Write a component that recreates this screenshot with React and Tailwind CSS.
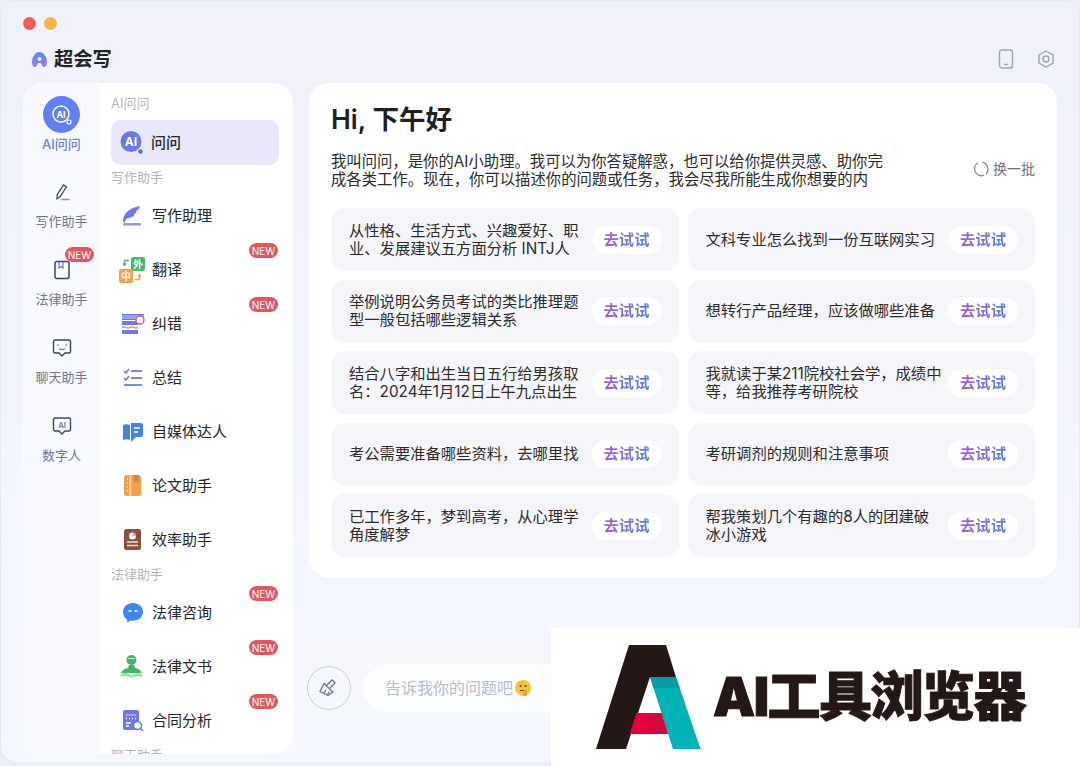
const Badge = ({ cls = "right-[1px] top-0" }) => (
  <span className={`absolute ${cls} flex h-[15px] w-[29px] items-center justify-center rounded-full bg-[#e0585f] text-[10px] leading-none text-white`}>NEW</span>
);

const Svg = ({ children, s = 26, vb = "0 0 26 26" }) => (
  <svg width={s} height={s} viewBox={vb} fill="none" className="shrink-0">{children}</svg>
);

const icons = {
  ask: (
    <Svg>
      <circle cx="11" cy="11.500" r="10.500" fill="#6d78e6" />
      <text x="11" y="16" textAnchor="middle" fontSize="12" fontWeight="700" fill="#fff" fontFamily="Inter">AI</text>
      <circle cx="20.500" cy="21.500" r="2.200" fill="#5a64d8" />
    </Svg>
  ),
  write: (
    <Svg>
      <path d="M3 17C4 10 9 5 20 3c-1 3-2 4-4 5 1 1 0 2-2 3 1 1 0 2-2 3-2 1-5 1-6 2l-1 3H3v-2z" fill="#6f78e6" />
      <rect x="3" y="20" width="18" height="2.400" rx="1.200" fill="#8e96ee" />
      <path d="M9 17h6" stroke="#fff" strokeWidth="1.200" />
    </Svg>
  ),
  translate: (
    <div className="ml-[-3px]">
      <Svg>
        <rect x="12" y="0" width="14" height="14" rx="2.500" fill="#45b766" />
        <text x="19" y="11" textAnchor="middle" fontSize="10" fontWeight="700" fill="#fff" fontFamily="Noto Sans CJK SC">外</text>
        <rect x="0" y="12" width="14" height="14" rx="2.500" fill="#f2a04a" />
        <text x="7" y="23" textAnchor="middle" fontSize="10" fontWeight="700" fill="#fff" fontFamily="Noto Sans CJK SC">中</text>
        <path d="M10 3.500H5.500V8M4 6.500l1.500 2 1.500-2" stroke="#45b766" strokeWidth="1.300" />
        <path d="M16 22.500h4.500V18M19 19.500l1.500-2 1.500 2" stroke="#f2a04a" strokeWidth="1.300" />
      </Svg>
    </div>
  ),
  correct: (
    <Svg s={24} vb="0 0 24 24">
      <rect x="1" y="2" width="22" height="6" fill="#6f78e6" />
      <path d="M1 4h22M1 6h22" stroke="#fff" strokeWidth=".6" />
      <rect x="1" y="9" width="16" height="4" fill="#6f78e6" />
      <path d="M1 15.500q2-1.500 4 0t4 0 4 0 4 0" stroke="#e0585f" strokeWidth="1" />
      <rect x="1" y="18" width="16" height="4" fill="#6f78e6" />
      <circle cx="19" cy="8" r="4" fill="#fff" stroke="#e0585f" strokeWidth="1.400" />
    </Svg>
  ),
  sum: (
    <Svg s={22} vb="0 0 22 22">
      <path d="M2 4l2 2 3-4M2 11l2 2 3-4" stroke="#6f78e6" strokeWidth="1.600" />
      <path d="M9 4h11M9 11h11M2 18h18" stroke="#7f87ea" strokeWidth="2" />
    </Svg>
  ),
  media: (
    <Svg s={22} vb="0 0 22 22">
      <path d="M1 4c2-1 5-1 7 0v15c-2-1-5-1-7 0z" fill="#3f85e6" />
      <path d="M9 2h10a2 2 0 0 1 2 2v10a2 2 0 0 1-2 2h-5l-5 5z" fill="#3f85e6" />
      <path d="M12 7h6M12 11h4" stroke="#fff" strokeWidth="1.500" />
    </Svg>
  ),
  thesis: (
    <Svg s={24} vb="0 0 24 24">
      <rect x="3" y="1" width="17" height="21" rx="2.500" fill="#eda14a" />
      <rect x="8" y="1" width="2.500" height="21" fill="#f6c98e" />
      <path d="M13 1h5v8l-2.500-2-2.500 2z" fill="#d9852a" />
      <path d="M6 5h1M6 9h1M6 13h1M6 17h1" stroke="#fff" strokeWidth="1.500" />
    </Svg>
  ),
  efficiency: (
    <Svg s={24} vb="0 0 24 24">
      <rect x="3" y="1" width="17" height="21" rx="2.500" fill="#8a4f3d" />
      <circle cx="11.500" cy="8" r="3.500" fill="#fff" />
      <path d="M11.500 8V4.500a3.500 3.500 0 0 1 3.500 3.500z" fill="#c9a79b" />
      <path d="M6 14h11M6 17.500h11" stroke="#f1e4df" strokeWidth="1.600" />
    </Svg>
  ),
  consult: (
    <Svg s={22} vb="0 0 22 22">
      <path d="M11 1c5.500 0 10 3.800 10 8.800s-4.500 9-10 9c-.8 0-2 0-3-.3L5.500 21l-.5-3.500C2.500 16 1 13 1 9.800 1 4.800 5.500 1 11 1z" fill="#3d87f0" />
      <path d="M6.500 9h3M12.500 9h3" stroke="#fff" strokeWidth="1.600" />
    </Svg>
  ),
  doc: (
    <Svg>
      <ellipse cx="11.500" cy="6" rx="5" ry="5" fill="#46b466" />
      <path d="M8 4.500h7" stroke="#cdeed6" strokeWidth="1.200" />
      <path d="M9 11h5l1 3c3 .5 6 2 7 5H1c1-3 4-4.500 7-5z" fill="#46b466" />
      <path d="M1 20c4-1 7-1 10.500 1 3.500-2 6.500-2 10.500-1v3c-4-1-7-1-10.500 1C8 22 5 22 1 23z" fill="#9fdcb1" />
    </Svg>
  ),
  contract: (
    <Svg s={24} vb="0 0 24 24">
      <rect x="2" y="1" width="16" height="20" rx="2" fill="#6f78e6" />
      <path d="M5 6h10" stroke="#d9dcfb" strokeWidth="1.200" />
      <path d="M5 9.500h1M8 9.500h1M11 9.500h1M14 9.500h1" stroke="#fff" strokeWidth="1.300" />
      <path d="M5 14h5M5 17h3" stroke="#fff" strokeWidth="1.300" />
      <circle cx="16.500" cy="16.500" r="4" fill="#fff" stroke="#4d7fd8" strokeWidth="1.500" />
      <path d="M19.500 19.500l2.500 2.500" stroke="#4d7fd8" strokeWidth="1.600" />
    </Svg>
  ),
};

const Item = ({ icon, label, isNew }) => (
  <div className="relative flex h-[54px] items-center gap-[6px] pl-[9px]">
    <span className="flex w-[26px] shrink-0 items-center justify-center">{icons[icon]}</span>
    <span className="text-[15px] leading-[20px] text-[#262626]">{label}</span>
    {isNew && <Badge />}
  </div>
);

const Section = ({ cls = "", children }) => (
  <div className={`h-[14px] text-[13px] leading-[14px] text-[#b4b5bb] ${cls}`}>{children}</div>
);

const railStroke = "#3f4560";
const RailItem = ({ label, isNew, children }) => (
  <div className="relative flex h-[78px] flex-col items-center">
    <span className="mt-[5px] flex h-[24px] w-[24px] items-center justify-center">{children}</span>
    <span className="mt-[9px] text-[13px] leading-[16px] text-[#70748f]">{label}</span>
    {isNew && <Badge cls="right-[6px] top-[-6px]" />}
  </div>
);

const prompts = [
  ["从性格、生活方式、兴趣爱好、职业、发展建议五方面分析 INTJ人", "文科专业怎么找到一份互联网实习"],
  ["举例说明公务员考试的类比推理题型一般包括哪些逻辑关系", "想转行产品经理，应该做哪些准备"],
  ["结合八字和出生当日五行给男孩取名：2024年1月12日上午九点出生", "我就读于某211院校社会学，成绩中等，给我推荐考研院校"],
  ["考公需要准备哪些资料，去哪里找", "考研调剂的规则和注意事项"],
  ["已工作多年，梦到高考，从心理学角度解梦", "帮我策划几个有趣的8人的团建破冰小游戏"],
];

const Card = ({ text }) => (
  <div className="flex h-[63px] items-center justify-between rounded-[14px] bg-[#f6f6fa] pl-[18px] pr-[17px]">
    <p className="w-[238px] text-[15.300px] leading-[18px] text-[#2b2b2b]">{text}</p>
    <span className="flex h-[28px] w-[70px] shrink-0 items-center justify-center rounded-full bg-white">
      <span className="bg-linear-to-r from-[#a25cd6] to-[#4f80e2] bg-clip-text text-[15.300px] font-bold leading-[20px] text-transparent">去试试</span>
    </span>
  </div>
);

export default function App() {
  return (
    <div className="relative h-[766px] w-[1080px] overflow-hidden bg-[#eceef6] font-['Inter','Noto_Sans_CJK_SC',sans-serif]">
      <div className="h-[763px] rounded-[16px] border border-[#e6e8f3] bg-linear-to-b from-[#f0f1fb] to-[#f6f8fe]">
        <div className="flex h-[45px] items-center gap-[8px] pl-[22px]">
          <span className="h-[13px] w-[13px] rounded-full bg-[#ee5f59]" />
          <span className="h-[13px] w-[13px] rounded-full bg-[#f3b54a]" />
        </div>
        <div className="flex h-[26px] items-center justify-between pl-[30px] pr-[24px]">
          <div className="flex items-center gap-[6px]">
            <svg width="17" height="17" viewBox="0 0 17 17" fill="none">
              <defs>
                <linearGradient id="lg" x1="0" y1="0" x2="0" y2="1">
                  <stop offset="0" stopColor="#4d8df2" />
                  <stop offset="1" stopColor="#a57bea" />
                </linearGradient>
              </defs>
              <path d="M8.500 1C12.500 1 16 6 16 11.500c0 2.500-1.200 4.500-3 4.500-1.500 0-2-1.200-2.300-2.500-.3-1-1-1.500-2.200-1.500s-1.900.5-2.200 1.500C6 14.800 5.500 16 4 16c-1.800 0-3-2-3-4.500C1 6 4.500 1 8.500 1z" fill="url(#lg)" />
              <circle cx="8.500" cy="8" r="2" fill="#f0f1fb" />
            </svg>
            <span className="text-[19.300px] font-bold leading-[26px] text-[#232323]">超会写</span>
          </div>
          <div className="flex items-center gap-[23px]">
            <svg width="16" height="20" viewBox="0 0 16 20" fill="none" stroke="#9ea3b3" strokeWidth="1.400">
              <rect x="1.500" y="1" width="13" height="18" rx="2.500" />
              <path d="M6 15.500h4" />
            </svg>
            <svg width="18" height="18" viewBox="0 0 18 18" fill="none" stroke="#9ea3b3" strokeWidth="1.400">
              <path d="M9 1l7 4v8l-7 4-7-4V5z" />
              <circle cx="9" cy="9" r="3" />
            </svg>
          </div>
        </div>

        <div className="mt-[11px] flex gap-[16px] pl-[22px]">
          <aside className="flex h-[671px] w-[270px] overflow-hidden rounded-[20px] bg-white">
            <div className="w-[77px] shrink-0 bg-[#f9faff] pt-[13px]">
              <div className="mb-[22px] flex flex-col items-center">
                <span className="flex h-[37px] w-[37px] items-center justify-center rounded-full bg-[#6180f2]">
                  <svg width="24" height="24" viewBox="0 0 24 24" fill="none">
                    <circle cx="11" cy="11" r="8" stroke="#fff" strokeWidth="1.500" />
                    <text x="11" y="14.500" textAnchor="middle" fontSize="9" fontWeight="700" fill="#fff" fontFamily="Inter">AI</text>
                    <circle cx="19" cy="19" r="2" fill="none" stroke="#fff" strokeWidth="1.200" />
                  </svg>
                </span>
                <span className="mt-[2px] text-[13px] font-medium leading-[18px] text-[#6b80db]">AI问问</span>
              </div>
              <RailItem label="写作助手">
                <svg width="20" height="20" viewBox="0 0 20 20" fill="none" stroke={railStroke} strokeWidth="1.300">
                  <path d="M5 16.800l.3-4.300L11.500 3l3 1.800-6.200 9.700z" />
                  <path d="M9.500 17.500h8" stroke="#8e92a8" />
                </svg>
              </RailItem>
              <RailItem label="法律助手" isNew>
                <svg width="18" height="20" viewBox="0 0 18 20" fill="none" stroke={railStroke} strokeWidth="1.500">
                  <rect x="2" y="1.500" width="14" height="17" rx="2" />
                  <path d="M6 2v6l2-1.500L10 8V2" stroke="#6f78e6" strokeWidth="1.200" />
                </svg>
              </RailItem>
              <RailItem label="聊天助手">
                <svg width="20" height="20" viewBox="0 0 20 20" fill="none" stroke={railStroke} strokeWidth="1.400">
                  <path d="M3 2h14a1.500 1.500 0 0 1 1.500 1.500v10A1.500 1.500 0 0 1 17 15h-4l-3 3-3-3H3a1.500 1.500 0 0 1-1.500-1.500v-10A1.500 1.500 0 0 1 3 2z" />
                  <path d="M6 6.500v1M14 6.500v1" />
                  <path d="M7 10.500c2 1.500 4 1.500 6 0" stroke="#6f78e6" />
                </svg>
              </RailItem>
              <RailItem label="数字人">
                <svg width="20" height="20" viewBox="0 0 20 20" fill="none" stroke={railStroke} strokeWidth="1.400">
                  <path d="M3 2h14a1.500 1.500 0 0 1 1.500 1.500v10A1.500 1.500 0 0 1 17 15h-4l-3 3-3-3H3a1.500 1.500 0 0 1-1.500-1.500v-10A1.500 1.500 0 0 1 3 2z" />
                  <text x="10" y="11.500" textAnchor="middle" fontSize="7.500" fontWeight="700" fill="#6f78e6" stroke="none" fontFamily="Inter">AI</text>
                </svg>
              </RailItem>
            </div>
            <div className="ml-[11px] w-[168px] shrink-0 pt-[13px]">
              <Section cls="mb-[10px]">AI问问</Section>
              <div className="flex h-[45px] items-center gap-[6px] rounded-[10px] bg-[#e9e8fb] pl-[9px]">
                <span className="flex w-[26px] shrink-0 items-center justify-center">{icons.ask}</span>
                <span className="ml-[-1px] text-[15px] font-medium leading-[20px] text-[#262626]">问问</span>
              </div>
              <Section cls="mt-[5px] mb-[5px]">写作助手</Section>
              <Item icon="write" label="写作助理" />
              <Item icon="translate" label="翻译" isNew />
              <Item icon="correct" label="纠错" isNew />
              <Item icon="sum" label="总结" />
              <Item icon="media" label="自媒体达人" />
              <Item icon="thesis" label="论文助手" />
              <Item icon="efficiency" label="效率助手" />
              <Section cls="mb-[5px]">法律助手</Section>
              <Item icon="consult" label="法律咨询" isNew />
              <Item icon="doc" label="法律文书" isNew />
              <Item icon="contract" label="合同分析" isNew />
              <Section>聊天助手</Section>
            </div>
          </aside>

          <main className="w-[748px]">
            <div className="rounded-[20px] bg-white pb-[21px] pl-[22px] pr-[22px] pt-[18px]">
              <h1 className="h-[36px] text-[26.600px] font-semibold leading-[36px] text-[#1f1f1f]">Hi, 下午好</h1>
              <div className="mt-[16px] flex items-center justify-between">
                <p className="h-[36px] w-[556px] text-[15.350px] leading-[18px] text-[#2b2b2b]">
                  我叫问问，是你的AI小助理。我可以为你答疑解惑，也可以给你提供灵感、助你完成各类工作。现在，你可以描述你的问题或任务，我会尽我所能生成你想要的内
                </p>
                <div className="mb-[4px] flex items-center gap-[4px]">
                  <svg width="16" height="16" viewBox="0 0 16 16" fill="none" stroke="#7c8090" strokeWidth="1.200">
                    <path d="M9.500 1.300A7 7 0 0 1 13 13" />
                    <path d="M11 14.300A7 7 0 0 1 5 1.700" />
                  </svg>
                  <span className="text-[14px] leading-[18px] text-[#70737f]">换一批</span>
                </div>
              </div>
              <div className="mt-[19px] grid grid-cols-2 gap-x-[9px] gap-y-[8.500px]">
                {prompts.flat().map((t) => <Card key={t} text={t} />)}
              </div>
            </div>

            <div className="ml-[-2px] mt-[86px] flex items-center gap-[12px]">
              <span className="flex h-[44px] w-[44px] shrink-0 items-center justify-center rounded-full border border-[#c9ccd6]">
                <svg width="22" height="22" viewBox="0 0 22 22" fill="none" stroke="#70747f" strokeWidth="1.300">
                  <path d="M9 8l5-5 3 3-5 5" />
                  <path d="M6 6.500l9 8.500-5 3.500-8-4z" />
                  <path d="M6 16l2-3M9.500 17.500l2-3" />
                </svg>
              </span>
              <div className="flex h-[48px] w-[672px] items-center gap-[1px] rounded-full bg-[#fcfdff] pl-[22px]">
                <span className="text-[16px] leading-[22px] text-[#b9bcca]">告诉我你的问题吧</span>
                <svg width="18" height="18" viewBox="0 0 18 18">
                  <circle cx="9" cy="9" r="8" fill="#f5c33b" />
                  <circle cx="6.500" cy="7" r="1" fill="#5c3a10" />
                  <circle cx="11.500" cy="7" r="1" fill="#5c3a10" />
                  <path d="M6 11.500h5" stroke="#5c3a10" strokeWidth="1" />
                  <rect x="9" y="11" width="4" height="6" rx="1.500" fill="#e8a12c" />
                </svg>
              </div>
            </div>
          </main>
        </div>
      </div>

      {/* watermark overlay */}
      <div className="absolute bottom-0 right-0 flex h-[138px] w-[529px] items-center bg-white pl-[45px]">
        <svg width="105" height="104" viewBox="0 0 105 104">
          <path d="M0 104L33 0h37l10 32H54L30 104z" fill="#231815" />
          <path d="M54 32h26l24.500 72H77z" fill="#00b2b4" />
          <path d="M54 32h26l3.800 11H57.500z" fill="#0b9aa0" />
          <path d="M40.500 68h25L72 89H33.500z" fill="#e4003f" />
          <path d="M55 68h10.500L72 89H55z" fill="#cf0a3c" />
        </svg>
        <span className="ml-[12px] text-[53px] font-black leading-none tracking-[-1.500px] text-[#231815] [-webkit-text-stroke:1px_#231815]">AI工具浏览器</span>
      </div>
    </div>
  );
}
